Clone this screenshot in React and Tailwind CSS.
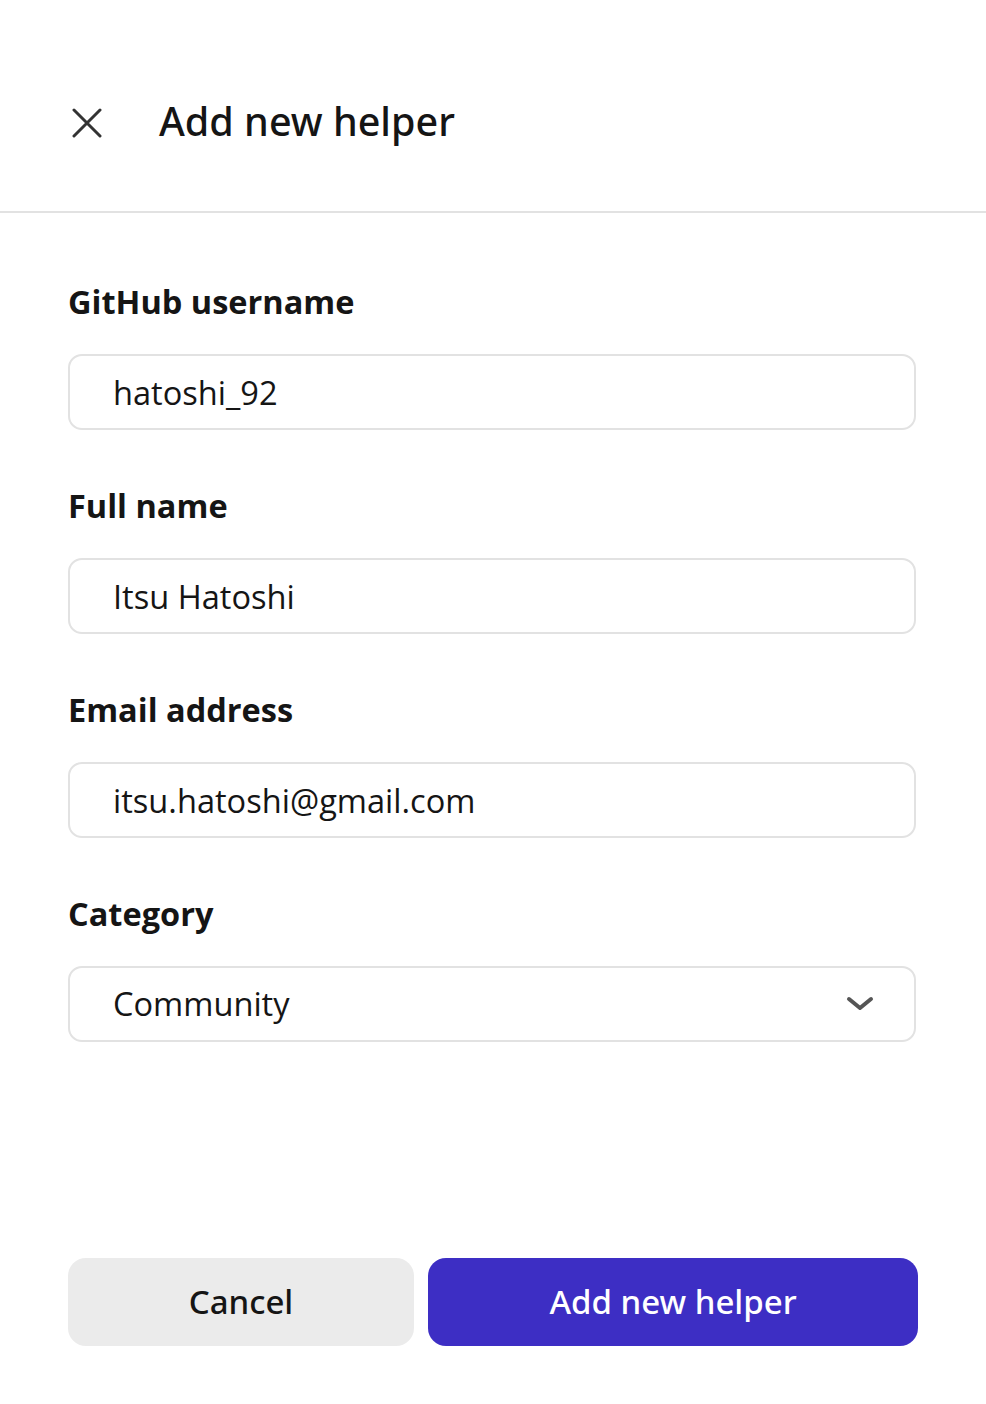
import React, { useState } from "react";

const Field = ({ label, value, onChange }) => (
  <div className="flex flex-col">
    <label className="h-10 leading-10 text-[32.5px] font-bold text-[#151515]">
      {label}
    </label>
    <input
      value={value}
      onChange={(e) => onChange(e.target.value)}
      className="mt-8 h-[76px] w-full rounded-[14px] border-2 border-[#e2e2e2] bg-white pl-[43px] text-[32.6px] text-[#151515] outline-none"
    />
  </div>
);

const App = () => {
  const [username, setUsername] = useState("hatoshi_92");
  const [fullName, setFullName] = useState("Itsu Hatoshi");
  const [email, setEmail] = useState("itsu.hatoshi@gmail.com");
  const [category, setCategory] = useState("Community");

  return (
    <div
      className="flex min-h-[1404px] w-[986px] flex-col bg-white"
      style={{ fontFamily: '"Open Sans", "Noto Sans", sans-serif' }}
    >
      {/* header */}
      <div className="flex h-[213px] items-center border-b-2 border-[#e2e2e2] pt-[32px]">
        <button className="ml-[70px] flex h-8 w-8 items-center justify-center text-[#333]">
          <svg width="32" height="32" viewBox="0 0 32 32" fill="none">
            <path
              d="M4 4L30 30M30 4L4 30"
              stroke="currentColor"
              strokeWidth="3"
              strokeLinecap="round"
            />
          </svg>
        </button>
        <h1 className="ml-[57px] font-['Noto_Sans',sans-serif] text-[39.5px] font-medium text-[#151515]">
          Add new helper
        </h1>
      </div>

      {/* form */}
      <div className="flex flex-col gap-14 pl-[68px] pr-[70px] pt-[69px]">
        <Field label="GitHub username" value={username} onChange={setUsername} />
        <Field label="Full name" value={fullName} onChange={setFullName} />
        <Field label="Email address" value={email} onChange={setEmail} />

        <div className="flex flex-col">
          <label className="h-10 leading-10 text-[32.5px] font-bold text-[#151515]">
            Category
          </label>
          <div className="relative mt-8">
            <select
              value={category}
              onChange={(e) => setCategory(e.target.value)}
              className="h-[76px] w-full appearance-none rounded-[14px] border-2 border-[#e2e2e2] bg-white pl-[43px] text-[32.6px] text-[#151515] outline-none"
            >
              <option>Community</option>
              <option>Core team</option>
              <option>Sponsor</option>
            </select>
            <svg
              className="pointer-events-none absolute right-[42px] top-[30px] text-[#555]"
              width="28"
              height="16"
              viewBox="0 0 28 16"
              fill="none"
            >
              <path
                d="M3 3L14 12L25 3"
                stroke="currentColor"
                strokeWidth="4"
                strokeLinecap="round"
                strokeLinejoin="round"
              />
            </svg>
          </div>
        </div>
      </div>

      {/* actions */}
      <div className="mt-[216px] flex gap-[14px] pl-[68px] font-['Noto_Sans',sans-serif]">
        <button className="h-[88px] w-[346px] rounded-[18px] bg-[#ebebeb] text-[33px] font-medium text-[#151515]">
          Cancel
        </button>
        <button className="h-[88px] w-[490px] rounded-[18px] bg-[#3d2ec4] text-[33px] font-medium text-white">
          Add new helper
        </button>
      </div>
    </div>
  );
};

export default App;
